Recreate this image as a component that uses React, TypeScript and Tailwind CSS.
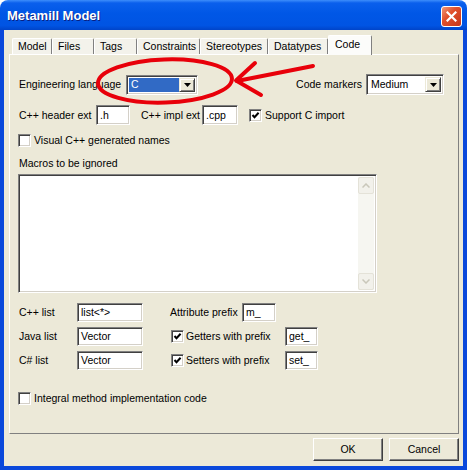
import React from "react";

const sunken =
  "bg-white border border-t-[#808080] border-l-[#808080] border-b-white border-r-white shadow-[inset_1px_1px_0_#404040,inset_-1px_-1px_0_#D4D0C8]";

function Field({ w, text, h = "h-[19px]" }: { w: string; text: string; h?: string }) {
  return (
    <div className={`${w} ${h} ${sunken} flex items-center pl-[3px] shrink-0 whitespace-nowrap overflow-hidden`}>
      {text}
    </div>
  );
}

function Check({ checked }: { checked?: boolean }) {
  return (
    <div className={`w-[13px] h-[13px] ${sunken} flex items-center justify-center shrink-0`}>
      {checked && (
        <svg width="9" height="9" viewBox="0 0 9 9">
          <path d="M1.5 4 L3.5 6.2 L7.6 1.8" stroke="#000" strokeWidth="2" fill="none" />
        </svg>
      )}
    </div>
  );
}

function DropBtn() {
  return (
    <div className="w-[16px] h-full bg-[#ECE9D8] border border-t-[#ECE9D8] border-l-[#ECE9D8] border-b-[#404040] border-r-[#404040] shadow-[inset_1px_1px_0_#fff,inset_-1px_-1px_0_#808080] flex items-center justify-center shrink-0">
      <svg width="7" height="4" viewBox="0 0 7 4">
        <path d="M0 0 H7 L3.5 4 Z" fill="#000" />
      </svg>
    </div>
  );
}

function Label({ children, className = "" }: { children: React.ReactNode; className?: string }) {
  return <div className={`whitespace-nowrap shrink-0 ${className}`}>{children}</div>;
}

const tabs: [string, string][] = [
  ["Model", "w-[40px]"],
  ["Files", "w-[42px]"],
  ["Tags", "w-[43px]"],
  ["Constraints", "w-[63px]"],
  ["Stereotypes", "w-[68px]"],
  ["Datatypes", "w-[60px]"],
];

export default function App() {
  return (
    <div className="w-[469px] h-[472px] bg-white font-['Liberation_Sans',Arial,sans-serif] text-[10.5px] leading-[13px] text-black">
      <div className="relative w-[467px] h-[470px] flex flex-col rounded-t-[8px] overflow-hidden">
        {/* Title bar */}
        <div className="h-[30px] shrink-0 flex items-start justify-between pl-[7px] pr-[5px] bg-[linear-gradient(to_bottom,#3D8DFB_0%,#0A5FEC_10%,#0057E6_45%,#0054E3_85%,#0044C9_100%)]">
          <div className="mt-[8px] text-white font-bold text-[13px] leading-[15px] [text-shadow:1px_1px_0_#0A1E80]">
            Metamill Model
          </div>
          <div className="mt-[6px] w-[21px] h-[21px] rounded-[3px] border border-white bg-[linear-gradient(to_bottom_right,#F09878_0%,#E0502C_40%,#C6361A_100%)] flex items-center justify-center">
            <svg width="11" height="11" viewBox="0 0 11 11">
              <path d="M1.5 1.5 L9.5 9.5 M9.5 1.5 L1.5 9.5" stroke="#fff" strokeWidth="2.2" strokeLinecap="square" />
            </svg>
          </div>
        </div>

        {/* Body */}
        <div className="flex-1 flex flex-col bg-[#ECE9D8] border-x-4 border-b-4 border-[#0A48DB]">
          {/* Tab strip */}
          <div className="mt-[5px] ml-[8px] h-[19px] flex items-end">
            {tabs.map(([t, w]) => (
              <div
                key={t}
                className={`${w} h-[16px] flex items-center pl-[5px] bg-[#F3F2EB] border-t border-l border-r border-t-white border-l-white border-r-[#808080] rounded-t-[2px]`}
              >
                {t}
              </div>
            ))}
            <div className="relative z-10 w-[44px] h-[20px] -mb-[1px] flex items-center pl-[6px] pb-[2px] bg-[#FCFCFA] border-t border-l border-r border-t-white border-l-white border-r-[#808080] rounded-t-[2px]">
              Code
            </div>
          </div>

          {/* Panel */}
          <div className="ml-[5px] w-[450px] h-[380px] shrink-0 border border-t-white border-l-white border-r-[#808080] border-b-[#808080] flex flex-col pt-[19px] pl-[8px] pr-[14px]">
            {/* Row 1 */}
            <div className="h-[21px] flex items-center">
              <Label className="w-[108px] pl-[1px]">Engineering language</Label>
              <div className={`w-[72px] h-[20px] ${sunken} p-[2px] flex`}>
                <div className="flex-1 bg-[#316AC5] text-white flex items-center pl-[2px]">C</div>
                <DropBtn />
              </div>
              <div className="flex-1" />
              <Label className="mr-[4px]">Code markers</Label>
              <div className={`w-[78px] h-[21px] ${sunken} p-[2px] flex`}>
                <div className="flex-1 flex items-center pl-[2px]">Medium</div>
                <DropBtn />
              </div>
            </div>

            {/* Row 2 */}
            <div className="mt-[10px] h-[20px] flex items-center">
              <Label className="w-[78px] pl-[1px]">C++ header ext</Label>
              <Field w="w-[34px]" h="h-[20px]" text=".h" />
              <Label className="ml-[11px] w-[61px]">C++ impl ext</Label>
              <Field w="w-[36px]" h="h-[20px]" text=".cpp" />
              <div className="ml-[11px]">
                <Check checked />
              </div>
              <Label className="ml-[3px]">Support C import</Label>
            </div>

            {/* Row 3 */}
            <div className="mt-[9px] h-[13px] flex items-center">
              <Check />
              <Label className="ml-[3px]">Visual C++ generated names</Label>
            </div>

            <div className="mt-[9px] h-[14px] leading-[14px] pl-[1px]">Macros to be ignored</div>

            {/* Textarea */}
            <div className={`mt-[4px] w-[359px] h-[119px] ${sunken} p-[2px] flex justify-end`}>
              <div className="w-[16px] h-full bg-[#F6F6F1] flex flex-col justify-between">
                <div className="h-[17px] rounded-[2px] border border-[#E4E2D8] bg-[#F2F1EB] flex items-center justify-center">
                  <svg width="8" height="5" viewBox="0 0 8 5">
                    <path d="M0.5 4.5 L4 1 L7.5 4.5" stroke="#C9C7BA" strokeWidth="1.5" fill="none" />
                  </svg>
                </div>
                <div className="h-[17px] rounded-[2px] border border-[#E4E2D8] bg-[#F2F1EB] flex items-center justify-center">
                  <svg width="8" height="5" viewBox="0 0 8 5">
                    <path d="M0.5 0.5 L4 4 L7.5 0.5" stroke="#C9C7BA" strokeWidth="1.5" fill="none" />
                  </svg>
                </div>
              </div>
            </div>

            {/* Lower rows */}
            <div className="mt-[10px] h-[19px] flex items-center">
              <Label className="w-[59px] pl-[1px]">C++ list</Label>
              <Field w="w-[66px]" text="list<*>" />
              <Label className="ml-[27px] w-[72px]">Attribute prefix</Label>
              <Field w="w-[34px]" text="m_" />
            </div>
            <div className="mt-[5px] h-[19px] flex items-center">
              <Label className="w-[59px] pl-[1px]">Java list</Label>
              <Field w="w-[66px]" text="Vector" />
              <div className="ml-[28px]">
                <Check checked />
              </div>
              <Label className="ml-[2px] w-[99px]">Getters with prefix</Label>
              <Field w="w-[33px]" text="get_" />
            </div>
            <div className="mt-[5px] h-[19px] flex items-center">
              <Label className="w-[59px] pl-[1px]">C# list</Label>
              <Field w="w-[66px]" text="Vector" />
              <div className="ml-[28px]">
                <Check checked />
              </div>
              <Label className="ml-[2px] w-[99px]">Setters with prefix</Label>
              <Field w="w-[33px]" text="set_" />
            </div>

            <div className="mt-[22px] h-[13px] flex items-center">
              <Check />
              <Label className="ml-[3px]">Integral method implementation code</Label>
            </div>
          </div>

          {/* Buttons */}
          <div className="mt-[4px] mr-[4px] flex justify-end gap-[6px]">
            {["OK", "Cancel"].map((b) => (
              <div
                key={b}
                className="w-[70px] h-[23px] flex items-center justify-center bg-[#ECE9D8] border border-t-white border-l-white border-b-[#404040] border-r-[#404040] shadow-[inset_-1px_-1px_0_#808080]"
              >
                {b}
              </div>
            ))}
          </div>
        </div>

        {/* Red annotation */}
        <svg className="absolute inset-0 pointer-events-none" width="467" height="470" viewBox="0 0 467 470">
          <ellipse
            cx="165"
            cy="81"
            rx="67"
            ry="21.5"
            transform="rotate(-2 165 81)"
            stroke="#E8000A"
            strokeWidth="4"
            fill="none"
          />
          <path d="M313 66 L237 81" stroke="#E8000A" strokeWidth="4" strokeLinecap="round" fill="none" />
          <path d="M255 63 L236 80.5 L261 95" stroke="#E8000A" strokeWidth="4" strokeLinecap="round" strokeLinejoin="round" fill="none" />
        </svg>
      </div>
    </div>
  );
}
